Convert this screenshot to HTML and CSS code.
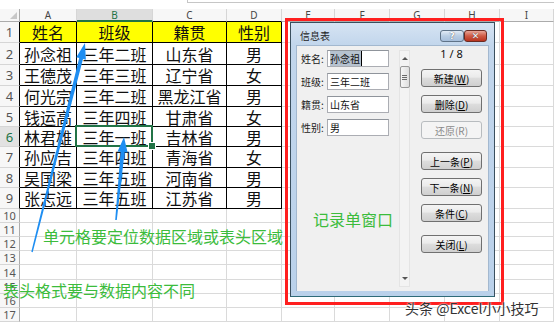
FILE: index.html
```html
<!DOCTYPE html>
<html>
<head>
<meta charset="utf-8">
<title>记录单</title>
<link rel="stylesheet" href="styles.css">
</head>
<body>
<div class="fbar"><div class="fbox"></div></div>

<div class="sheet">
  <div class="corner"><span class="tri"></span></div>
  <div class="ch k">A</div><div class="ch k sel">B</div><div class="ch k">C</div><div class="ch k">D</div>
  <div class="ch">E</div><div class="ch">F</div><div class="ch">G</div><div class="ch">H</div><div class="ch">I</div>

  <div class="rh k">1</div>
  <div class="d y">姓名</div><div class="d y">班级</div><div class="d y">籍贯</div><div class="d y">性别</div>
  <div></div><div></div><div></div><div></div><div></div>

  <div class="rh k">2</div>
  <div class="d">孙念祖</div><div class="d">三年二班</div><div class="d">山东省</div><div class="d">男</div>
  <div></div><div></div><div></div><div></div><div></div>

  <div class="rh k">3</div>
  <div class="d">王德茂</div><div class="d">三年三班</div><div class="d">辽宁省</div><div class="d">女</div>
  <div></div><div></div><div></div><div></div><div></div>

  <div class="rh k">4</div>
  <div class="d">何光宗</div><div class="d">三年二班</div><div class="d">黑龙江省</div><div class="d">男</div>
  <div></div><div></div><div></div><div></div><div></div>

  <div class="rh k">5</div>
  <div class="d">钱运高</div><div class="d">三年四班</div><div class="d">甘肃省</div><div class="d">女</div>
  <div></div><div></div><div></div><div></div><div></div>

  <div class="rh k sel">6</div>
  <div class="d">林君雄</div><div class="d cur">三年一班</div><div class="d">吉林省</div><div class="d">男</div>
  <div></div><div></div><div></div><div></div><div></div>

  <div class="rh k">7</div>
  <div class="d">孙应吉</div><div class="d">三年四班</div><div class="d">青海省</div><div class="d">女</div>
  <div></div><div></div><div></div><div></div><div></div>

  <div class="rh k">8</div>
  <div class="d">吴国梁</div><div class="d">三年五班</div><div class="d">河南省</div><div class="d">男</div>
  <div></div><div></div><div></div><div></div><div></div>

  <div class="rh k">9</div>
  <div class="d">张志远</div><div class="d">三年五班</div><div class="d">江苏省</div><div class="d">男</div>
  <div></div><div></div><div></div><div></div><div></div>

  <div class="rh sm">10</div><div></div><div></div><div></div><div></div><div></div><div></div><div></div><div></div><div></div>
  <div class="rh sm">11</div><div></div><div></div><div></div><div></div><div></div><div></div><div></div><div></div><div></div>
  <div class="rh sm">12</div><div></div><div></div><div></div><div></div><div></div><div></div><div></div><div></div><div></div>
  <div class="rh sm">13</div><div></div><div></div><div></div><div></div><div></div><div></div><div></div><div></div><div></div>
  <div class="rh sm">14</div><div></div><div></div><div></div><div></div><div></div><div></div><div></div><div></div><div></div>
  <div class="rh sm">15</div><div></div><div></div><div></div><div></div><div></div><div></div><div></div><div></div><div></div>
  <div class="rh sm">16</div><div></div><div></div><div></div><div></div><div></div><div></div><div></div><div></div><div></div>
  <div class="rh sm">17</div><div></div><div></div><div></div><div></div><div></div><div></div><div></div><div></div><div></div>
</div>

<!-- record form dialog -->
<div class="frame"></div>
<div class="dlg">
  <div class="title">
    <span>信息表</span>
    <div class="tbtns"><span class="help">?</span><span class="close">✕</span></div>
  </div>
  <div class="client">
    <div class="fields">
      <div class="row"><label>姓名:</label><div class="input"><span class="hl">孙念祖</span></div></div>
      <div class="row"><label>班级:</label><div class="input">三年二班</div></div>
      <div class="row"><label>籍贯:</label><div class="input">山东省</div></div>
      <div class="row"><label>性别:</label><div class="input">男</div></div>
    </div>
    <div class="scroll">
      <div class="sbtn"><span class="up"></span></div>
      <div class="thumb"><span class="grip"></span></div>
      <div class="track"></div>
      <div class="sbtn"><span class="down"></span></div>
    </div>
    <div class="btns">
      <div class="count">1 / 8</div>
      <button>新建(<u>W</u>)</button>
      <button>删除(<u>D</u>)</button>
      <button disabled>还原(R)</button>
      <button class="gap">上一条(<u>P</u>)</button>
      <button>下一条(<u>N</u>)</button>
      <button>条件(<u>C</u>)</button>
      <button class="gap">关闭(<u>L</u>)</button>
    </div>
  </div>
</div>

<svg class="arrows" width="554" height="324" viewBox="0 0 554 324">
  <polygon points="31.3,251.8 79.2,58 76.3,57.3 85,43 85.9,59.7 83,59 32.7,252.2"/>
  <polygon points="115.2,219.9 120.6,151.8 117.6,151.5 124,137 127.6,152.5 124.6,152.2 116.8,220.1"/>
</svg>

<div class="note n1">单元格要定位数据区域或表头区域</div>
<div class="note n2">表头格式要与数据内容不同</div>
<div class="note n3">记录单窗口</div>
<div class="mark">头条 @Excel小小技巧</div>
</body>
</html>
```

FILE: styles.css
```css
* { margin:0; padding:0; box-sizing:border-box; }
body { position:relative; width:554px; height:324px; overflow:hidden; background:#fff; font-family:"Noto Sans CJK SC", sans-serif; }

.fbar { height:9px; }
.fbox { margin-left:187px; height:3px; border-left:1px solid #c6c6c6; border-bottom:1px solid #c6c6c6; }

/* sheet grid */
.sheet { display:grid; grid-template-columns:20px 57px 76px 74px 55px 53px 55px 55px 55px 54px;
  grid-template-rows:13px 21px 22px 21px 21px 20px 20px 21px 20px 21px 14px 14px 14px 14px 15px 14px 14px 14px;
  font-size:16px; line-height:1; color:#111; }
.sheet > div { display:flex; align-items:center; justify-content:center; white-space:nowrap;
  border-right:1px solid #dadada; border-bottom:1px solid #dadada; }
.sheet .corner { justify-content:flex-end; align-items:flex-end; padding:0 2px 2px 0; background:#f7f7f7; border-bottom-color:#ababab; border-right-color:#ababab; }
.tri { width:0; height:0; border-left:7px solid transparent; border-bottom:7px solid #c8c8c8; }
.sheet .ch { background:#f7f7f7; font:10px "Noto Sans", sans-serif; color:#444; border-bottom-color:#ababab; border-right-color:#d6d6d6; }
.sheet .ch.k { border-bottom-color:#000; }
.sheet .ch.sel { background:#dedede; color:#217346; border-bottom:2px solid #217346; }
.sheet .rh { background:#f7f7f7; font:13px "Noto Sans", sans-serif; color:#555; border-right-color:#ababab; border-bottom-color:#d6d6d6; }
.sheet .rh.k { border-right-color:#000; }
.sheet .rh.sel { background:#e2e2e2; color:#217346; }
.sheet .rh.sm { font-size:11px; }
.sheet .d { border-right-color:#000; border-bottom-color:#000; }
.sheet .y { background:#ffff00; }
.cur { position:relative; }
.cur::after { content:""; position:absolute; top:-2px; left:-2px; right:-1px; bottom:-1px; border:2px solid #217346; }
.cur::before { content:""; position:absolute; right:-4px; bottom:-4px; width:6px; height:6px; background:#217346; border:1px solid #fff; z-index:1; }

/* red highlight box */
.frame { position:absolute; left:285px; top:18px; width:219px; height:287px; border:3px solid #ff1f1f; }

/* dialog */
.dlg { position:absolute; left:290px; top:22px; width:205px; height:275px; display:flex; flex-direction:column;
  border:1px solid #3a4f5e; border-bottom-color:#2f6b78; padding:0 5px 5px;
  background:linear-gradient(#d6e4f3, #c2d6ec 22px, #bad1ea); font-size:10px; color:#111; }
.title { height:22px; display:flex; align-items:flex-start; justify-content:space-between; }
.title span { padding:7px 0 0 4px; line-height:12px; color:#1e1e1e; }
.tbtns { display:flex; margin:7px 2px 0 0; }
.tbtns span { width:24px; height:12px; padding:0; border:1px solid #5f7388; border-radius:3px;
  display:flex; align-items:center; justify-content:center; font:bold 9px "DejaVu Sans", sans-serif; color:#fff; text-shadow:0 0 1px #223; }
.help { background:linear-gradient(#e2ebf6, #b9cde3 50%, #a6bedb); }
.tbtns .close { width:23px; border-color:#6b2b22; background:linear-gradient(#e8a698, #cf5a45 50%, #b8341f); }

.client { flex:1; display:flex; background:#f0f0f0; border:1px solid #a3b8cf; border-bottom:none; }
.fields { width:102px; padding:4px 0 0 4px; }
.row { display:flex; align-items:center; height:17px; margin-bottom:6px; }
.row label { width:26px; color:#222; }
.input { width:62px; height:17px; background:#fff; border:1px solid #abadb3; border-top-color:#8f949b; padding-left:2px; line-height:15px; }
.hl { background:#b6c2cf; border-right:1px solid #000; padding-right:1px; }

.scroll { width:11px; margin:4px 0 4px; display:flex; flex-direction:column; align-items:center; border:1px solid #e4e4e4; background:#f3f3f3; }
.sbtn { height:15px; display:flex; align-items:center; justify-content:center; }
.up { border:3px solid transparent; border-top:none; border-bottom:3px solid #555; }
.down { border:3px solid transparent; border-bottom:none; border-top:3px solid #555; }
.thumb { width:10px; height:22px; border:1px solid #979797; border-radius:2px; background:linear-gradient(90deg, #f6f6f6, #dedede);
  display:flex; align-items:center; justify-content:center; }
.grip { width:5px; height:5px; background:repeating-linear-gradient(#6a6a6a 0 1px, transparent 1px 2px); }
.track { flex:1; }

.btns { flex:1; display:flex; flex-direction:column; align-items:flex-start; padding-left:11px; }
.count { width:61px; height:23px; line-height:23px; text-align:center; font:11px "Noto Sans", sans-serif; color:#111; }
.btns button { width:61px; height:18px; margin-bottom:8px; border:1px solid #707070; border-radius:3px;
  background:linear-gradient(#f4f4f4, #ebebeb 45%, #dddddd 50%, #cfcfcf); font:10px "Noto Sans CJK SC", sans-serif; color:#000; }
.btns button:disabled { border-color:#b8bcbf; background:#f4f4f4; color:#8a8a8a; }
.btns button.gap { margin-top:5px; }

/* annotations */
.arrows { position:absolute; left:0; top:0; }
.arrows polygon { fill:#1e8ef2; }
.note { position:absolute; font-size:16px; line-height:16px; color:#3cbc3c; white-space:nowrap; }
.n1 { left:43px; top:228px; }
.n2 { left:3px; top:282px; }
.n3 { left:313px; top:211px; }
.mark { position:absolute; left:405px; top:300px; font-size:14px; line-height:16px; color:#333; white-space:nowrap;
  text-shadow:0 0 2px #fff, 0 0 2px #fff; }
```
